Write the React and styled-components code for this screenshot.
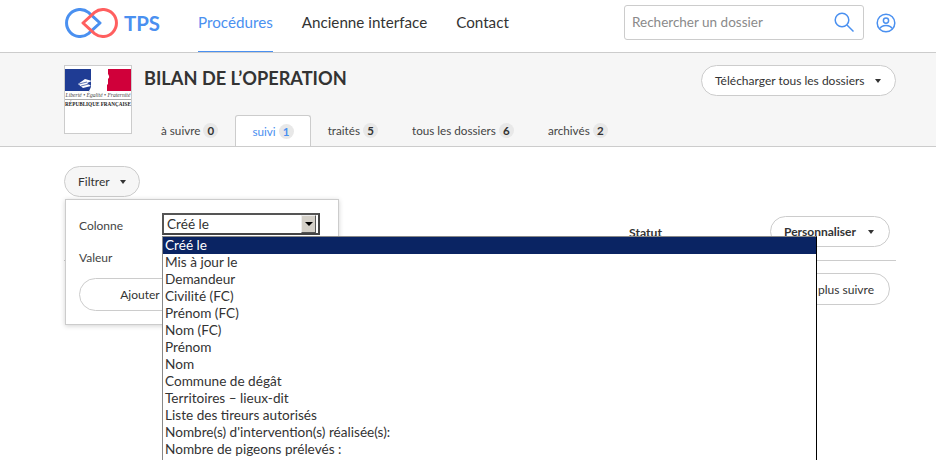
import React from 'react';
import styled, { createGlobalStyle } from 'styled-components';

const GlobalStyle = createGlobalStyle`
  html, body {
    margin: 0;
    height: 460px;
    overflow: hidden;
    background: #fff;
    font-family: "Lato", "Liberation Sans", sans-serif;
    color: #333;
  }
  * { box-sizing: border-box; }
`;

const Page = styled.div`
  position: relative;
  width: 936px;
  height: 460px;
  overflow: hidden;
`;

const Header = styled.header`
  height: 53px;
  border-bottom: 1px solid #ccc;
  display: flex;
  align-items: stretch;
  padding: 0 40px 0 65px;
`;

const Brand = styled.div`
  display: flex;
  align-items: center;
  gap: 6px;
  width: 133px;
  color: #4a90f0;
  font-size: 20.4px;
  font-weight: 700;
  padding-bottom: 7px;
`;

const Nav = styled.nav`
  display: flex;
  gap: 29px;
  flex: 1;
`;

const NavLink = styled.a`
  display: flex;
  align-items: center;
  height: 52px;
  padding-bottom: 8px;
  font-size: 15.2px;
  color: ${(p) => (p.$active ? '#4a90f0' : '#333')};
  border-bottom: 1px solid ${(p) => (p.$active ? '#4a90f0' : 'transparent')};
`;

const Search = styled.div`
  width: 240px;
  height: 35px;
  margin-top: 5px;
  border: 1px solid #ccc;
  border-radius: 3px;
  display: flex;
  align-items: center;
  justify-content: space-between;
  padding: 0 9px 1px 7px;
  font-size: 13.5px;
  color: #8a8a8a;
`;

const Account = styled.div`
  margin: 13px 0 0 12px;
  height: 20px;
  display: flex;
`;

const SubHeader = styled.section`
  height: 94px;
  background: #f6f6f6;
  border-bottom: 1px solid #ccc;
  padding: 12px 40px 0 64px;
  display: flex;
`;

const Emblem = styled.div`
  width: 68px;
  height: 69px;
  flex: none;
  background: #fff;
  border: 1px solid #ccc;
  padding: 3px 0 0;
  display: flex;
  flex-direction: column;
  align-items: center;
`;

const Motto = styled.div`
  font-family: "Liberation Serif", serif;
  font-style: italic;
  font-size: 5.6px;
  line-height: 7px;
  white-space: nowrap;
  margin-top: 1px;
  color: #444;
`;

const Republic = styled.div`
  font-family: "Liberation Serif", serif;
  font-size: 5.2px;
  line-height: 8px;
  font-weight: 700;
  white-space: nowrap;
  border-top: 1px solid #aaa;
  width: 100%;
  text-align: center;
  color: #222;
`;

const TitleArea = styled.div`
  flex: 1;
  padding-left: 12px;
  display: flex;
  flex-direction: column;
`;

const TitleRow = styled.div`
  display: flex;
  justify-content: space-between;
  align-items: flex-start;
  height: 51px;
`;

const Title = styled.h1`
  margin: 2px 0 0;
  font-size: 18.2px;
  line-height: 22px;
  font-weight: 700;
  color: #333;
`;

const PillButton = styled.button`
  font: inherit;
  font-size: 12px;
  font-weight: ${(p) => p.$weight || 400};
  color: #333;
  height: ${(p) => p.$height || 31}px;
  width: ${(p) => (p.$width ? `${p.$width}px` : 'auto')};
  background: ${(p) => p.$bg || '#fff'};
  border: 1px solid #ccc;
  border-radius: 16px;
  padding: 0 15px 0 13px;
  display: flex;
  align-items: center;
  justify-content: space-between;
  white-space: nowrap;
`;

const Caret = styled.span`
  width: 0;
  height: 0;
  margin-left: 10px;
  border-left: 3px solid transparent;
  border-right: 3px solid transparent;
  border-top: 4px solid #333;
`;

const Tabs = styled.div`
  display: flex;
  height: 31px;
`;

const Tab = styled.div`
  height: ${(p) => (p.$active ? '31px' : '30px')};
  padding: 0 ${(p) => (p.$active ? '16px' : '17px')};
  display: flex;
  align-items: center;
  gap: 3px;
  font-size: 11.7px;
  color: ${(p) => (p.$active ? '#4a90f0' : '#444')};
  background: ${(p) => (p.$active ? '#fff' : 'transparent')};
  border: ${(p) => (p.$active ? '1px solid #ccc' : 'none')};
  border-bottom: none;
  border-radius: 3px 3px 0 0;
`;

const Count = styled.span`
  width: 15px;
  height: 15px;
  border-radius: 50%;
  background: #e8e8e8;
  display: flex;
  align-items: center;
  justify-content: center;
  font-size: 11.5px;
  font-weight: 700;
  color: ${(p) => (p.$active ? '#4a90f0' : '#333')};
`;

const Main = styled.main`
  padding: 19px 40px 0 64px;
`;

const TableHead = styled.div`
  margin-top: 19px;
  height: 45px;
  border-bottom: 1px solid #ccc;
  padding-right: 6px;
  display: flex;
  justify-content: flex-end;
  align-items: flex-start;
`;

const ColumnTitle = styled.div`
  font-size: 12.2px;
  font-weight: 700;
  margin: 9px 108px 0 0;
`;

const RowActions = styled.div`
  margin-top: 12px;
  padding-right: 6px;
  display: flex;
  justify-content: flex-end;
`;

const FilterPanel = styled.div`
  position: absolute;
  left: 65px;
  top: 199px;
  width: 274px;
  height: 126px;
  background: #fff;
  border: 1px solid #ccc;
  box-shadow: 0 1px 5px rgba(0, 0, 0, 0.18);
  padding: 13px 13px;
  font-size: 12px;
`;

const FieldRow = styled.div`
  display: flex;
  align-items: center;
  height: 22px;
  margin-bottom: ${(p) => p.$gap || 0}px;
`;

const FieldLabel = styled.label`
  width: 83px;
  color: #444;
  margin-top: ${(p) => p.$offset || 0}px;
`;

const FakeSelect = styled.div`
  width: 158px;
  height: 22px;
  border: 2px solid #555;
  border-right-color: #444;
  border-bottom-color: #444;
  background: #fff;
  padding: 0 2px 0 3px;
  font-size: 13.6px;
  color: #333;
  display: flex;
  align-items: center;
  justify-content: space-between;
`;

const SelectValue = styled.span`
  margin-top: -1px;
`;

const SelectArrow = styled.span`
  width: 15px;
  height: 18px;
  background: #d4d0c8;
  border: 1px solid;
  border-color: #eee #555 #555 #eee;
  display: flex;
  align-items: center;
  justify-content: center;

  &::after {
    content: '';
    border-left: 4px solid transparent;
    border-right: 4px solid transparent;
    border-top: 4px solid #000;
  }
`;

const AddButton = styled(PillButton)`
  justify-content: center;
  border-radius: 17px;
`;

const OptionList = styled.ul`
  position: absolute;
  left: 162px;
  top: 236px;
  width: 655px;
  height: 240px;
  margin: 0;
  padding: 0;
  list-style: none;
  background: #fff;
  border: 1px solid #000;
  border-top-color: #888;
  border-left-color: #888;
  font-size: 13.6px;
`;

const Option = styled.li`
  height: 17px;
  line-height: 17px;
  padding-left: 2px;
  white-space: nowrap;
  color: ${(p) => (p.$selected ? '#fff' : '#333')};
  background: ${(p) => (p.$selected ? '#0a2463' : 'transparent')};
`;

const options = [
  'Créé le',
  'Mis à jour le',
  'Demandeur',
  'Civilité (FC)',
  'Prénom (FC)',
  'Nom (FC)',
  'Prénom',
  'Nom',
  'Commune de dégât',
  'Territoires – lieux-dit',
  'Liste des tireurs autorisés',
  "Nombre(s) d'intervention(s) réalisée(s):",
  'Nombre de pigeons prélevés :',
];

const tabs = [
  { label: 'à suivre', count: 0 },
  { label: 'suivi', count: 1, active: true },
  { label: 'traités', count: 5 },
  { label: 'tous les dossiers', count: 6 },
  { label: 'archivés', count: 2 },
];

const LogoMark = () => (
  <svg width="53" height="30" viewBox="0 0 53 30" fill="none" strokeWidth="3">
    <path d="M35 15 L23.4 4.4 A13.5 13.5 0 1 0 23.4 25.6 Z" stroke="#4a90f0" strokeLinejoin="round" />
    <path d="M18 15 L29.6 4.4 A13.5 13.5 0 1 1 29.6 25.6 Z" stroke="#ff5f5f" strokeLinejoin="round" />
  </svg>
);

const Marianne = () => (
  <svg width="66" height="22" viewBox="0 0 66 22">
    <rect x="0" y="0" width="26" height="22" fill="#1f3c94" />
    <rect x="42" y="0" width="24" height="22" fill="#d0003a" />
    <path d="M24 22 C27 17 27 13 29 10 C30 5 35 0 41 0 L43 0 L43 5 C45 8 44 9 43 10 L43 15 C40 18 38 19 38 22 Z" fill="#fff" />
    <path d="M13 15 L20 10 L27 12 L22 14 L26 17 L18 19 Z" fill="#fff" />
    <path d="M14 15 L22 13 M16 17 L24 15" stroke="#1f3c94" strokeWidth="0.7" />
  </svg>
);

const SearchIcon = () => (
  <svg width="20" height="20" viewBox="0 0 20 20" fill="none" stroke="#4a90f0" strokeWidth="1.5">
    <circle cx="8" cy="8" r="6.8" />
    <path d="M13 13 L19.5 19.5" />
  </svg>
);

const AccountIcon = () => (
  <svg width="20" height="20" viewBox="0 0 20 20" fill="none" stroke="#4a90f0" strokeWidth="1.5">
    <circle cx="10" cy="10" r="8.8" />
    <circle cx="10" cy="7.6" r="2.6" />
    <path d="M4 15.5 C5 13 7.5 12.4 10 12.4 C12.5 12.4 15 13 16 15.5" />
  </svg>
);

export default function App() {
  return (
    <Page>
      <GlobalStyle />
      <Header>
        <Brand>
          <LogoMark />
          TPS
        </Brand>
        <Nav>
          <NavLink $active>Procédures</NavLink>
          <NavLink>Ancienne interface</NavLink>
          <NavLink>Contact</NavLink>
        </Nav>
        <Search>
          Rechercher un dossier
          <SearchIcon />
        </Search>
        <Account>
          <AccountIcon />
        </Account>
      </Header>

      <SubHeader>
        <Emblem>
          <Marianne />
          <Motto>Liberté • Égalité • Fraternité</Motto>
          <Republic>RÉPUBLIQUE FRANÇAISE</Republic>
        </Emblem>
        <TitleArea>
          <TitleRow>
            <Title>BILAN DE L’OPERATION</Title>
            <PillButton $width={195}>
              Télécharger tous les dossiers
              <Caret />
            </PillButton>
          </TitleRow>
          <Tabs>
            {tabs.map((t) => (
              <Tab key={t.label} $active={t.active}>
                {t.label}
                <Count $active={t.active}>{t.count}</Count>
              </Tab>
            ))}
          </Tabs>
        </TitleArea>
      </SubHeader>

      <Main>
        <PillButton $bg="#f6f6f6" $width={76}>
          Filtrer
          <Caret />
        </PillButton>
        <TableHead>
          <ColumnTitle>Statut</ColumnTitle>
          <PillButton $width={120} $weight={700}>
            Personnaliser
            <Caret />
          </PillButton>
        </TableHead>
        <RowActions>
          <PillButton $height={32}>Ne plus suivre</PillButton>
        </RowActions>
      </Main>

      <FilterPanel>
        <FieldRow $gap={11}>
          <FieldLabel $offset={2}>Colonne</FieldLabel>
          <FakeSelect>
            <SelectValue>Créé le</SelectValue>
            <SelectArrow />
          </FakeSelect>
        </FieldRow>
        <FieldRow $gap={10}>
          <FieldLabel>Valeur</FieldLabel>
        </FieldRow>
        <AddButton $width={124} $height={33}>Ajouter</AddButton>
      </FilterPanel>

      <OptionList>
        {options.map((o, i) => (
          <Option key={o} $selected={i === 0}>{o}</Option>
        ))}
      </OptionList>
    </Page>
  );
}
